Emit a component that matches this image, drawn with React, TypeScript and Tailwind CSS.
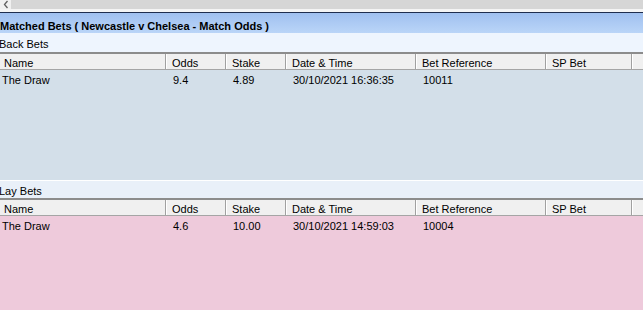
import React from "react";

const columns = [
  { label: "Name", width: "w-[166px]", pad: "pl-[4px]" },
  { label: "Odds", width: "w-[60px]", pad: "pl-[6px]" },
  { label: "Stake", width: "w-[60px]", pad: "pl-[6px]" },
  { label: "Date & Time", width: "w-[130px]", pad: "pl-[6px]" },
  { label: "Bet Reference", width: "w-[130px]", pad: "pl-[6px]" },
  { label: "SP Bet", width: "w-[86px]", pad: "pl-[6px]" },
];

const dataCells = [
  { width: "w-[166px]", pad: "pl-[2px]" },
  { width: "w-[60px]", pad: "pl-[7px]" },
  { width: "w-[60px]", pad: "pl-[7px]" },
  { width: "w-[130px]", pad: "pl-[7px]" },
  { width: "w-[130px]", pad: "pl-[7px]" },
  { width: "w-[86px]", pad: "pl-[7px]" },
];

type Bet = { name: string; odds: string; stake: string; date: string; ref: string; sp: string };

function HeaderRow() {
  return (
    <div className="flex h-[18px] border-t-2 border-t-[#8c8c8c] border-b border-b-[#a5a5a5] bg-[#f0f0f0]">
      {columns.map((c) => (
        <div
          key={c.label}
          className={`${c.width} ${c.pad} shrink-0 pt-[4px] border-r border-r-[#a0a0a0] shadow-[1px_0_0_#ffffff] leading-none`}
        >
          {c.label}
        </div>
      ))}
      <div className="flex-1 ml-[1px]" />
    </div>
  );
}

function DataRow({ bet }: { bet: Bet }) {
  const values = [bet.name, bet.odds, bet.stake, bet.date, bet.ref, bet.sp];
  return (
    <div className="flex h-[17px] pt-[5px]">
      {dataCells.map((c, i) => (
        <div key={i} className={`${c.width} ${c.pad} shrink-0 whitespace-nowrap leading-none`}>
          {values[i]}
        </div>
      ))}
    </div>
  );
}

export default function App() {
  const back: Bet = { name: "The Draw", odds: "9.4", stake: "4.89", date: "30/10/2021 16:36:35", ref: "10011", sp: "" };
  const lay: Bet = { name: "The Draw", odds: "4.6", stake: "10.00", date: "30/10/2021 14:59:03", ref: "10004", sp: "" };

  return (
    <div className="w-[643px] h-[310px] overflow-hidden flex flex-col bg-white text-[11px] text-black font-['Liberation_Sans',Arial,sans-serif]">
      {/* scrollbar remnant */}
      <div className="flex h-[9px] bg-[#d6d6d6]">
        <div className="w-[11px] bg-[#f0f0f0] flex items-start justify-center">
          <svg width="6" height="9" viewBox="0 0 6 9">
            <path d="M4.5 1 L1.5 4.5 L4.5 8" fill="none" stroke="#606060" strokeWidth="1.3" />
          </svg>
        </div>
      </div>
      <div className="h-[4px] bg-[#f4f4f4] border-b border-b-[#1f2d4d]" />

      <div className="h-[20px] pt-[8px] bg-gradient-to-b from-[#a0c0ef] to-[#bad5f8] font-bold leading-none whitespace-nowrap">
        Matched Bets ( Newcastle v Chelsea - Match Odds )
      </div>

      <div className="h-[19px] pt-[6px] bg-[#eef5fe] leading-none -ml-[1px]">Back Bets</div>
      <HeaderRow />
      <div className="h-[110px] bg-[#d3dfe9]">
        <DataRow bet={back} />
      </div>
      <div className="h-[1px] bg-white" />

      <div className="h-[17px] pt-[5px] bg-[#e9f0f9] leading-none -ml-[1px]">Lay Bets</div>
      <HeaderRow />
      <div className="flex-1 bg-[#eecadb]">
        <DataRow bet={lay} />
      </div>
    </div>
  );
}
